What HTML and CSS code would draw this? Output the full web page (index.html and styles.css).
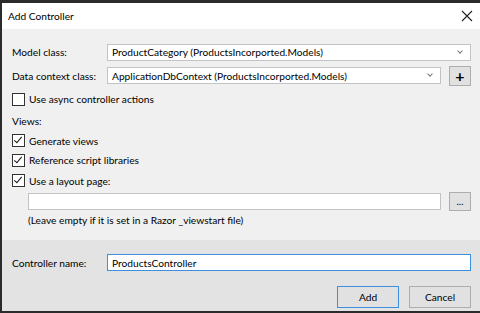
FILE: index.html
```html
<!DOCTYPE html>
<html lang="en">
<head>
    <meta charset="UTF-8">
    <title>Add Controller</title>
    <link rel="stylesheet" href="styles.css">
</head>
<body>
    <div class="dialog">
        <div class="title-bar">
            <span class="title">Add Controller</span>
            <svg class="close" width="12" height="12" viewBox="0 0 12 12">
                <path d="M1 1 L11 11 M11 1 L1 11" stroke="#222" stroke-width="1.1" fill="none"/>
            </svg>
        </div>

        <div class="main">
            <div class="row r1">
                <span class="label">Model class:</span>
                <div class="select wide">
                    <span>ProductCategory (ProductsIncorported.Models)</span>
                    <span class="chevron"></span>
                </div>
            </div>
            <div class="row r2">
                <span class="label">Data context class:</span>
                <div class="select narrow">
                    <span>ApplicationDbContext (ProductsIncorported.Models)</span>
                    <span class="chevron"></span>
                </div>
                <button class="btn-small plus">+</button>
            </div>
            <div class="row r3">
                <label class="check"><span class="box"></span>Use async controller actions</label>
            </div>
            <div class="row r4">
                <span>Views:</span>
            </div>
            <div class="row r5">
                <label class="check"><span class="box checked"></span>Generate views</label>
            </div>
            <div class="row r6">
                <label class="check"><span class="box checked"></span>Reference script libraries</label>
            </div>
            <div class="row r7">
                <label class="check"><span class="box checked"></span>Use a layout page:</label>
            </div>
            <div class="row r8 indent">
                <div class="text-input layout-input"></div>
                <button class="btn-small dots">...</button>
            </div>
            <div class="row r9 indent">
                <span>(Leave empty if it is set in a Razor _viewstart file)</span>
            </div>
        </div>

        <div class="footer">
            <div class="row name-row">
                <span class="label">Controller name:</span>
                <div class="text-input name-input">ProductsController</div>
            </div>
            <div class="buttons">
                <button class="btn primary">Add</button>
                <button class="btn">Cancel</button>
            </div>
        </div>
    </div>
</body>
</html>
```

FILE: styles.css
```css
body {
    margin: 0;
    background-color: #2b2b2b;
    font-family: Lato, "Liberation Sans", sans-serif;
    font-size: 10.2px;
    color: #000;
}

.dialog {
    margin: 3px 0 2px 2px;
    height: 308px;
    display: flex;
    flex-direction: column;
    background-color: #f0f0f0;
}

.title-bar {
    height: 26px;
    background-color: #fff;
    display: flex;
    align-items: center;
    justify-content: space-between;
    padding: 0 7px 0 6px;
}

.main {
    padding: 12px 9px 0 10px;
    height: 199px;
}

.row {
    display: flex;
    align-items: center;
    white-space: nowrap;
}

.r1 { height: 22px; }
.r2 { height: 25px; }
.r3 { height: 22px; }
.r4 { height: 21px; }
.r5 { height: 19px; }
.r6 { height: 20px; }
.r7 { height: 21px; }
.r8 { height: 20px; }
.r9 { height: 17px; }

.indent {
    padding-left: 16px;
}

.label {
    width: 95px;
    flex-shrink: 0;
}

.select,
.text-input {
    height: 15px;
    background-color: #fff;
    border: 1px solid #c3c3c3;
    display: flex;
    align-items: center;
    padding: 0 4px;
}

.select {
    justify-content: space-between;
}

.wide {
    flex: 1;
}

.narrow,
.layout-input {
    flex: 1;
    margin-right: 8px;
}

.chevron {
    width: 3px;
    height: 3px;
    border-right: 1px solid #777;
    border-bottom: 1px solid #777;
    transform: rotate(45deg);
    margin: 0 4px 3px 0;
}

.btn-small {
    width: 22px;
    height: 20px;
    background-color: #e1e1e1;
    border: 1px solid #adadad;
    padding: 0;
    font-family: inherit;
    color: #000;
}

.plus {
    font-size: 16px;
    font-weight: bold;
    line-height: 16px;
}

.dots {
    font-size: 10px;
    line-height: 12px;
    height: 19px;
}

.check {
    display: flex;
    align-items: center;
    gap: 4px;
}

.box {
    width: 11px;
    height: 11px;
    border: 1px solid #333;
    background-color: #fff;
    position: relative;
}

.box.checked:after {
    content: "";
    position: absolute;
    left: 3px;
    top: 0;
    width: 3px;
    height: 7px;
    border-right: 1.5px solid #111;
    border-bottom: 1.5px solid #111;
    transform: rotate(40deg);
}

.footer {
    flex: 1;
    background-color: #e3e3e3;
    padding: 14px 9px 0 10px;
}

.name-row {
    height: 17px;
}

.name-input {
    flex: 1;
    border-color: #3c8fdd;
}

.buttons {
    display: flex;
    justify-content: flex-end;
    gap: 10px;
    margin-top: 15px;
}

.btn {
    width: 62px;
    height: 22px;
    background-color: #e1e1e1;
    border: 1px solid #adadad;
    font-family: inherit;
    font-size: 10.2px;
    color: #000;
    padding: 0;
}

.btn.primary {
    border-color: #3c8fdd;
}
```
